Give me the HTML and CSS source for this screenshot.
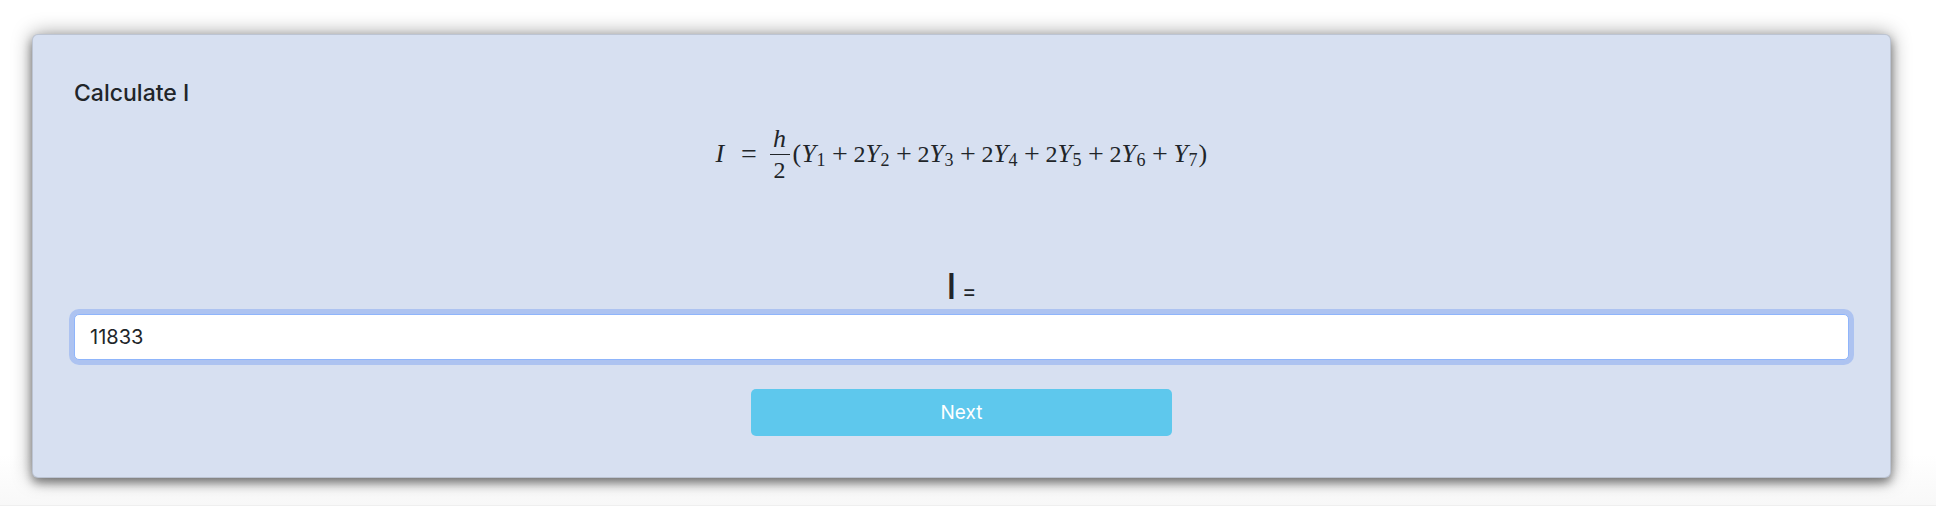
FILE: index.html
```html
<!DOCTYPE html>
<html lang="en">
<head>
<meta charset="utf-8">
<meta name="viewport" content="width=device-width, initial-scale=1">
<title>Calculate I</title>
<link rel="stylesheet" href="styles.css">
</head>
<body>
<form class="card">
  <h1 class="title">Calculate I</h1>
  <div class="formula">
    <span class="var lhs">I</span>
    <span class="op equals">=</span>
    <span class="fraction"><span class="var num">h</span><span class="den">2</span></span>
    <span class="paren">(</span>
    <span class="var">Y</span><sub>1</sub>
    <span class="op">+</span><span class="coef">2</span><span class="var">Y</span><sub>2</sub>
    <span class="op">+</span><span class="coef">2</span><span class="var">Y</span><sub>3</sub>
    <span class="op">+</span><span class="coef">2</span><span class="var">Y</span><sub>4</sub>
    <span class="op">+</span><span class="coef">2</span><span class="var">Y</span><sub>5</sub>
    <span class="op">+</span><span class="coef">2</span><span class="var">Y</span><sub>6</sub>
    <span class="op">+</span><span class="var">Y</span><sub>7</sub>
    <span class="paren">)</span>
  </div>
  <label class="answer-label" for="answer"><span class="symbol">I</span> <span class="sign">=</span></label>
  <input class="answer" id="answer" type="text" value="11833">
  <button class="next" type="button">Next</button>
</form>
</body>
</html>
```

FILE: styles.css
```css
* {
  box-sizing: border-box;
}

html {
  min-height: 100%;
  display: grid;
  background: #fff;
}

body {
  margin: 0;
  padding: 34px 45px 27px 32px;
  border-bottom: 1px solid #efefef;
  background: linear-gradient(to bottom, #fff 90%, #f8f8f8);
  color: #212529;
  font-family: Inter, "Liberation Sans", sans-serif;
  font-size: 20px;
}

.card {
  display: flex;
  flex-direction: column;
  padding: 44px 41px 41px;
  border: 1px solid rgba(0, 0, 0, 0.12);
  border-radius: 6px;
  background: #d7e0f1;
  box-shadow: 0 5px 10px rgba(0, 0, 0, 0.4), 0 0 20px rgba(0, 0, 0, 0.4);
}

.title {
  margin: 0 0 16px;
  font-size: 23px;
  font-weight: 500;
  line-height: 28px;
}

.formula {
  display: flex;
  align-items: center;
  justify-content: center;
  height: 62px;
  margin-bottom: 79px;
  font-family: "Liberation Serif", serif;
  font-size: 24px;
  line-height: 30px;
}

.var {
  width: 15px;
  font-size: 26px;
  font-style: italic;
}

.lhs {
  width: 17px;
}

.op {
  width: 27px;
  font-size: 28px;
  text-align: center;
}

.equals {
  width: 33px;
}

.fraction {
  width: 20px;
  margin: 0 3px 0 4px;
  text-align: center;
}

.num,
.den {
  display: block;
  width: auto;
}

.num {
  border-bottom: 1px solid #212529;
}

.coef {
  width: 12px;
}

.formula sub {
  width: 10px;
  padding-top: 12px;
  font-size: 18px;
}

.paren {
  width: 9px;
  font-size: 26px;
}

.answer-label {
  line-height: 44px;
  text-align: center;
}

.symbol {
  font-size: 36px;
  font-weight: 500;
}

.sign {
  font-size: 22px;
}

.answer {
  width: 100%;
  height: 46px;
  padding: 0 15px;
  border: 1px solid #8fb5fb;
  border-radius: 5px;
  outline: none;
  background: #fff;
  color: #212529;
  font: inherit;
  box-shadow: 0 0 0 5px #adc3f1;
}

.next {
  align-self: center;
  width: calc(25% - 23px);
  height: 47px;
  margin-top: 29px;
  border: 0;
  border-radius: 5px;
  background: #5ec8ed;
  color: #fff;
  font: inherit;
  font-size: 19px;
}
```
